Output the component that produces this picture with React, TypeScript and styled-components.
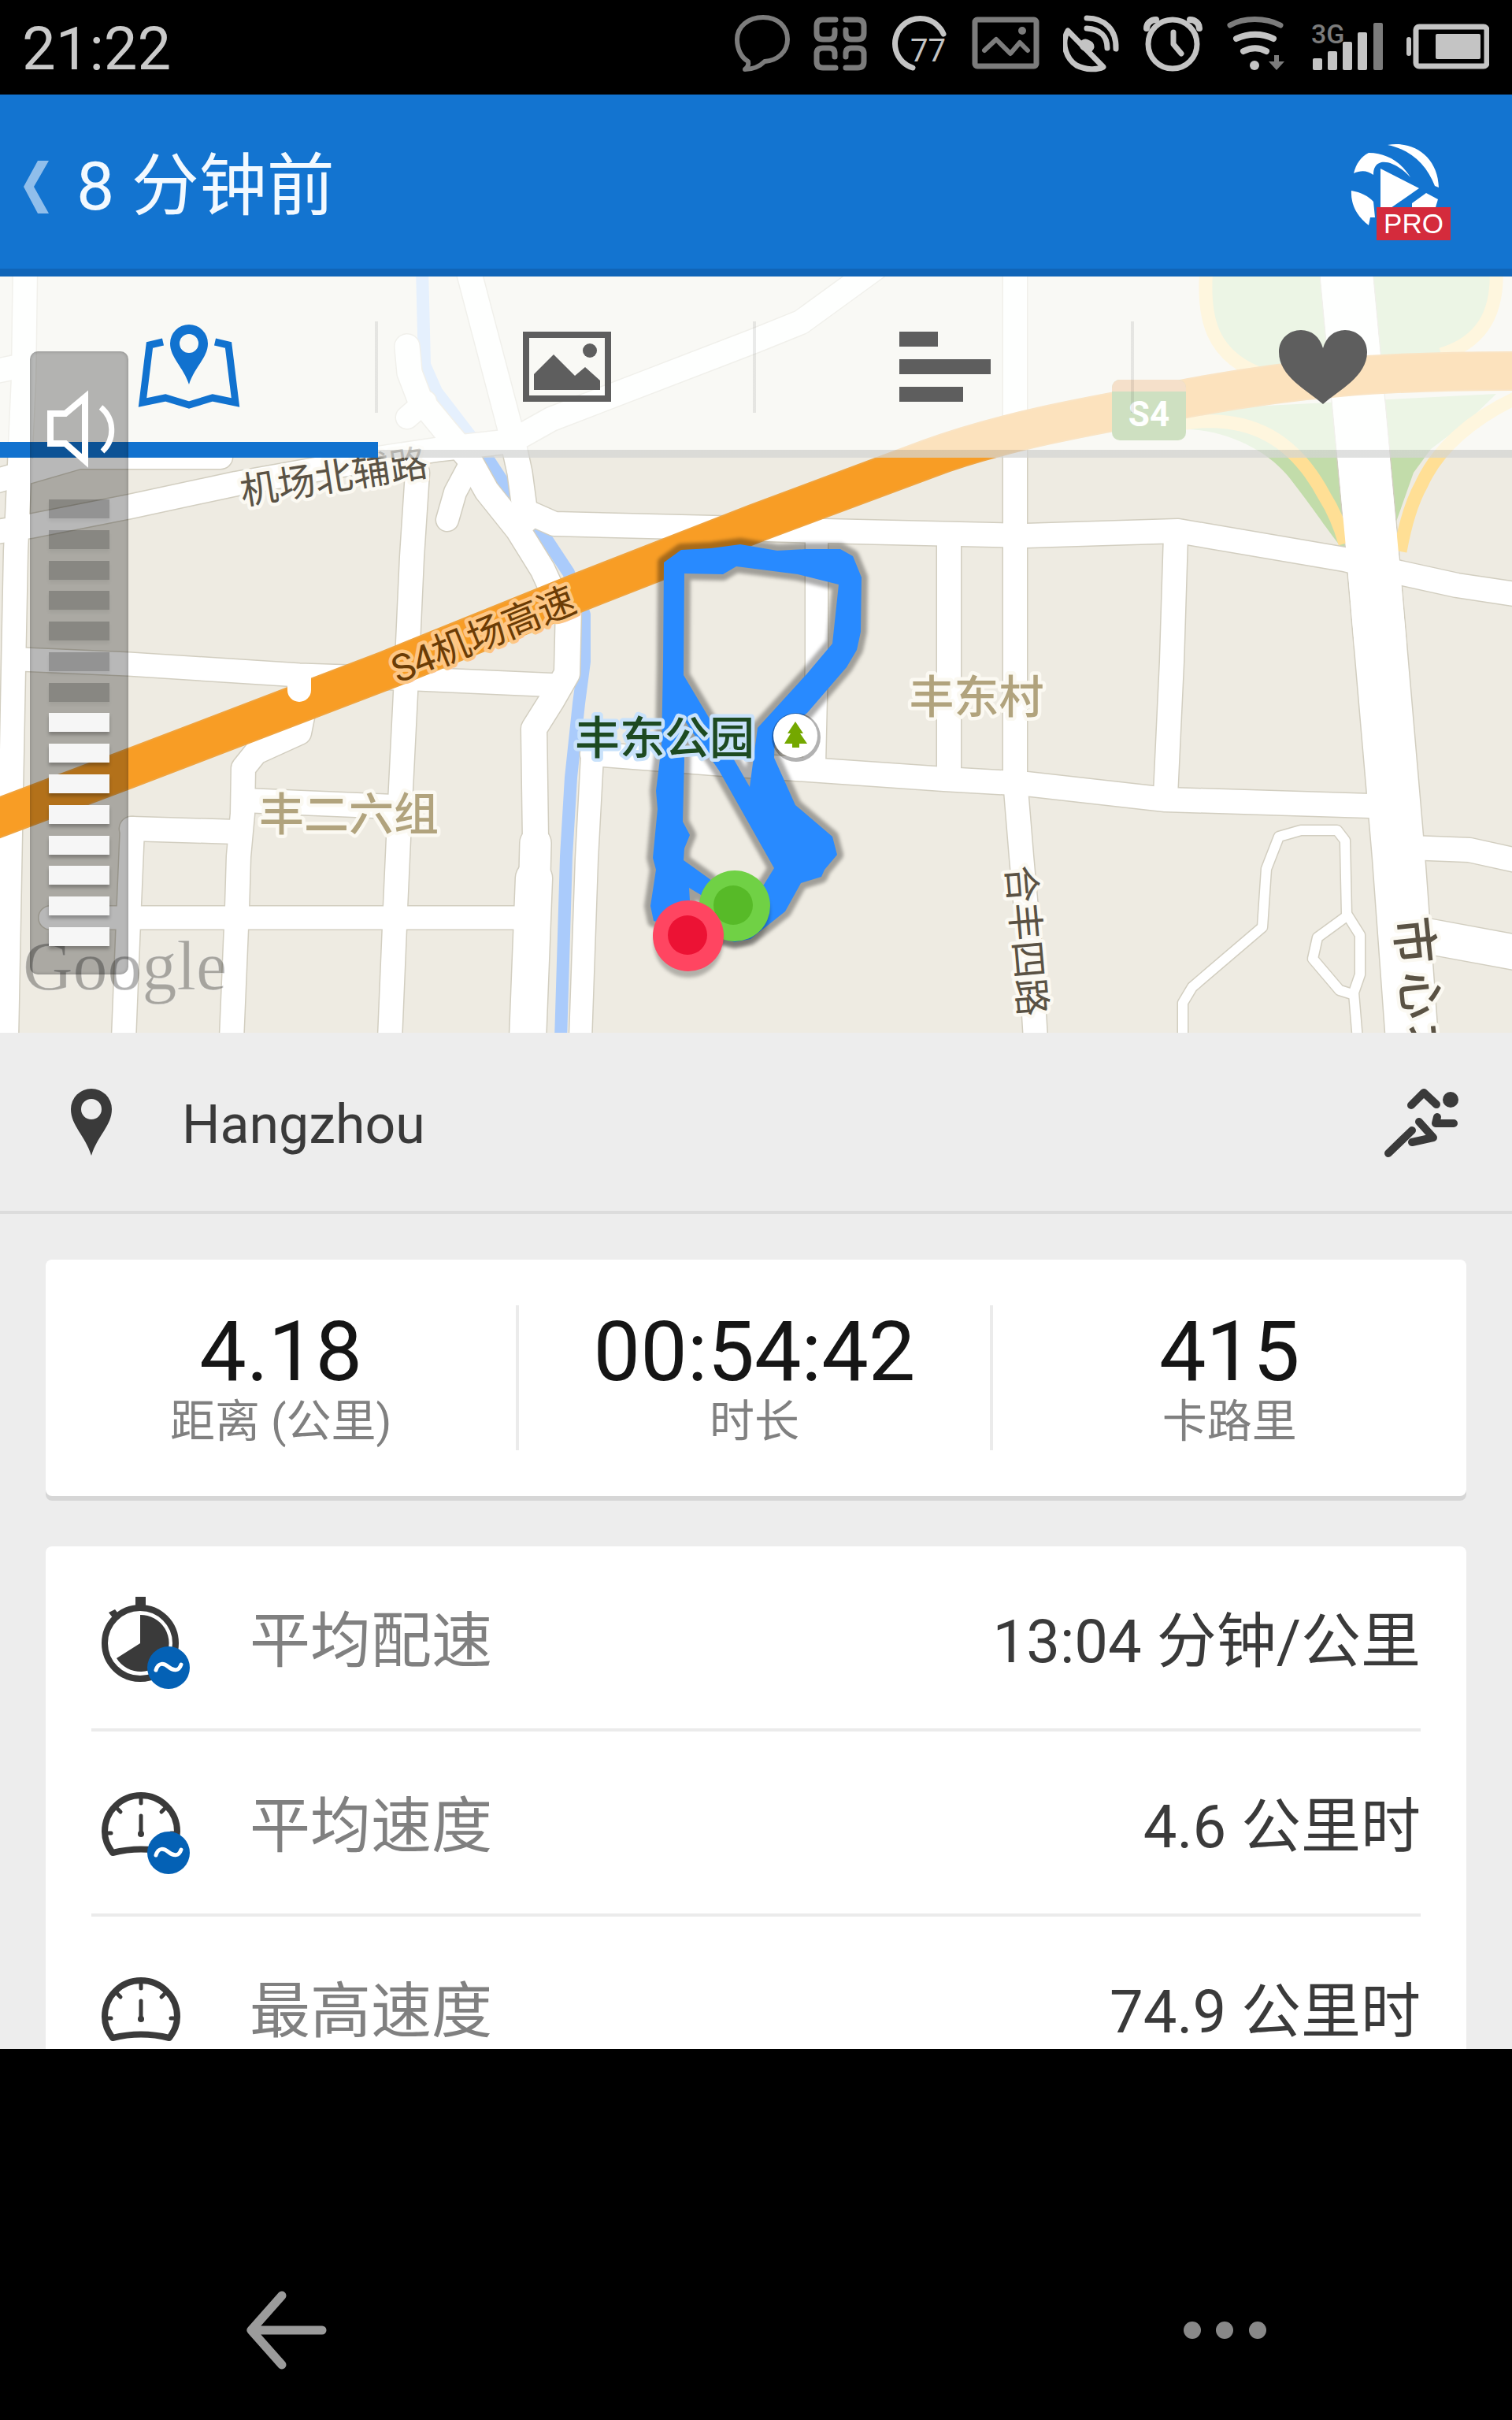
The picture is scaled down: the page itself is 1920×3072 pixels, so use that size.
import React, { useState } from 'react';
import styled, { createGlobalStyle } from 'styled-components';

const GlobalStyle = createGlobalStyle`
  * { box-sizing: border-box; }
  body { margin: 0; background: #000; }
  body, button { font-family: Roboto, "Noto Sans CJK SC", sans-serif; }
  button { border: 0; padding: 0; background: none; color: inherit; cursor: pointer; }
  svg { display: block; flex: none; }
  dl, dd, dt, h1, p { margin: 0; font-weight: 400; }
`;

const Screen = styled.div`
  display: flex;
  flex-direction: column;
  height: 100vh;
  background: #000;
`;

const StatusBar = styled.div`
  display: flex;
  align-items: center;
  justify-content: space-between;
  flex: none;
  height: 120px;
  padding: 0 29px 0 28px;
  color: #cacaca;
`;

const Clock = styled.time`
  font-size: 76px;
  line-height: 120px;
  padding-top: 4px;
`;

const StatusIcons = styled.div`
  display: flex;
  gap: 30px;
`;

const Header = styled.header`
  display: flex;
  align-items: center;
  justify-content: space-between;
  flex: none;
  height: 231px;
  padding: 12px 72px 0 25px;
  background: #1374d0;
  border-bottom: 10px solid #1065b8;
`;

const BackButton = styled.button`
  display: flex;
  align-items: center;
  gap: 32px;
  color: #f2f9ff;
`;

const Title = styled.h1`
  font-size: 86px;
  line-height: 120px;
`;

const LogoLink = styled.a`
  padding-top: 14px;
`;

const Content = styled.main`
  flex: 1 1 0;
  min-height: 0;
  overflow-y: auto;
  scrollbar-width: none;
  background: #ededed;
`;

const MapPanel = styled.section`
  position: relative;
  background: #efece4;
`;

const MapDrawing = styled.svg`
  width: 100%;
  height: auto;
`;

const Tabs = styled.nav`
  position: absolute;
  inset: 0 0 auto 0;
  display: grid;
  grid-template-columns: repeat(4, 1fr);
  height: 230px;
  background: rgba(254, 255, 253, 0.7);
`;

const Tab = styled.button<{ $active: boolean }>`
  display: flex;
  align-items: center;
  justify-content: center;
  color: ${p => (p.$active ? '#1172cf' : '#5e5e5e')};
  background-image:
    linear-gradient(${p => (p.$active ? '#1172cf, #1172cf' : 'rgba(0,0,0,.12), rgba(0,0,0,.12)')}),
    linear-gradient(rgba(0, 0, 0, 0.08), rgba(0, 0, 0, 0.08));
  background-repeat: no-repeat;
  background-size: 100% ${p => (p.$active ? 20 : 10)}px, 4px 116px;
  background-position: 0 100%, right 0 center;
  &:last-child {
    background-size: 100% ${p => (p.$active ? 20 : 10)}px, 0 0;
  }
`;

const VolumePanel = styled.div`
  position: absolute;
  top: 95px;
  left: 38px;
  display: flex;
  flex-direction: column;
  align-items: center;
  gap: 40px;
  width: 125px;
  height: 791px;
  padding: 48px 0 36px;
  border-radius: 10px;
  background: rgba(0, 0, 0, 0.28);
  box-shadow: inset 0 0 4px rgba(0, 0, 0, 0.25);
`;

const VolumeLevels = styled.div`
  display: flex;
  flex: 1;
  flex-direction: column;
  justify-content: space-between;
`;

const VolumeStep = styled.span<{ $on: boolean }>`
  width: 77px;
  height: 24px;
  background: ${p => (p.$on ? '#f6f6f6' : 'rgba(0,0,0,.2)')};
  box-shadow: 0 4px 4px rgba(0, 0, 0, ${p => (p.$on ? 0.25 : 0.05)});
`;

const LocationRow = styled.section`
  display: flex;
  align-items: center;
  height: 230px;
  padding: 0 66px 0 89px;
  border-bottom: 4px solid #dcdcdc;
  color: #3a3a3a;
`;

const Place = styled.p`
  flex: 1;
  padding: 8px 0 0 88px;
  font-size: 68px;
  line-height: 80px;
`;

const Cards = styled.div`
  display: flex;
  flex-direction: column;
  gap: 64px;
  padding: 58px;
`;

const Card = styled.section`
  border-radius: 8px;
  background: #fff;
  box-shadow: 0 6px 0 #d6d6d6;
`;

const Summary = styled.dl`
  display: grid;
  grid-template-columns: repeat(3, 1fr);
  padding: 58px 0;
`;

const Stat = styled.div`
  display: flex;
  flex-direction: column-reverse;
  align-items: center;
  justify-content: flex-end;
  height: 184px;
  border-right: 4px solid #ebebeb;
  &:last-child { border-right: 0; }
`;

const StatValue = styled.dd`
  color: #151515;
  font-size: 106px;
  line-height: 118px;
`;

const StatLabel = styled.dt`
  color: #808080;
  font-size: 57px;
  line-height: 60px;
`;

const Metrics = styled.dl`
  padding: 0 58px;
`;

const Metric = styled.div`
  display: flex;
  align-items: center;
  height: 235px;
  padding: 6px 0 0 5px;
  background: linear-gradient(#ebebeb, #ebebeb) 0 100% / 100% 4px no-repeat;
`;

const MetricName = styled.dt`
  flex: 1;
  padding-left: 66px;
  color: #808080;
  font-size: 77px;
  line-height: 100px;
`;

const MetricValue = styled.dd`
  color: #3a3a3a;
  font-size: 76px;
  line-height: 100px;
`;

const NavBar = styled.nav`
  display: flex;
  align-items: flex-end;
  justify-content: space-between;
  flex: none;
  height: 471px;
  padding: 0 300px 54px;
  color: #9b9b9b;
`;

const NavButton = styled.button`
  display: flex;
  align-items: center;
  justify-content: center;
  width: 128px;
  height: 120px;
`;

/* Status icons share one horizontal ruler, so each starts at its own x. */
function StatusGlyph({ x, w, label, children }: { x: number; w: number; label: string; children: React.ReactNode }) {
  return (
    <svg width={w} height={120} viewBox={`${x} 0 ${w} 120`} role="img" aria-label={label} fill="none" stroke="#c4c4c4" strokeWidth={6} strokeLinecap="round" strokeLinejoin="round">
      {children}
    </svg>
  );
}

const DIM = '#7c7c7c';

function StatusGlyphs() {
  return (
    <StatusIcons>
      <StatusGlyph x={934} w={70} label="message">
        <path stroke={DIM} d="M951 78C942 73 937 62 937 50C937 34 951 22 970 22S1001 34 1001 50S988 77 972 78C966 84 957 88 947 88C951 85 952 82 951 78Z" />
      </StatusGlyph>
      <StatusGlyph x={1034} w={70} label="apps">
        <g stroke={DIM} strokeWidth={7}>
          <path d="M1062 25H1046Q1038 25 1038 33V42Q1038 50 1046 50H1054Q1061 50 1061 42V38" />
          <path d="M1075 25H1090Q1098 25 1098 33V42Q1098 50 1090 50H1082Q1075 50 1075 42V38" />
          <path d="M1061 72V68Q1061 61 1054 61H1046Q1038 61 1038 68V78Q1038 86 1046 86H1062" />
          <path d="M1075 72V68Q1075 61 1082 61H1090Q1098 61 1098 68V78Q1098 86 1090 86H1075" />
        </g>
      </StatusGlyph>
      <StatusGlyph x={1134} w={70} label="77">
        <path strokeWidth={7} d="M1160 86A32 32 0 1 1 1199 43" />
        <text x={1157} y={78} fontSize={40} fontFamily="Roboto" fill="#c4c4c4" stroke="none">77</text>
      </StatusGlyph>
      <StatusGlyph x={1234} w={87} label="picture">
        <g stroke={DIM}>
          <rect x={1239} y={25} width={78} height={59} rx={3} strokeWidth={7} />
          <path d="M1251 64L1266 50L1284 68L1296 54L1306 64" />
          <circle cx={1299} cy={39} r={5} fill={DIM} stroke="none" />
        </g>
      </StatusGlyph>
      <StatusGlyph x={1351} w={72} label="location">
        <path strokeWidth={7} d="M1357 39C1348 55 1355 75 1368 83C1380 89 1394 89 1402 85Z" />
        <path d="M1379 57L1383 59" strokeWidth={15} />
        <path strokeWidth={7} d="M1381 36C1398 37 1407 46 1407 61M1381 23C1404 23 1419 38 1418 62" />
      </StatusGlyph>
      <StatusGlyph x={1453} w={75} label="alarm">
        <circle cx={1490} cy={56} r={31} strokeWidth={7} />
        <path strokeWidth={7} d="M1491 41V56L1501 68" />
        <path d="M1457 36C1457 30 1462 25 1469 25M1524 36C1524 30 1519 25 1512 25" strokeWidth={8} />
      </StatusGlyph>
      <StatusGlyph x={1558} w={78} label="wifi">
        <path stroke={DIM} strokeWidth={7} d="M1563 32C1580 22 1608 22 1627 32" />
        <path strokeWidth={8} d="M1571 49C1586 42 1604 42 1618 49M1580 65C1590 60 1600 60 1609 65" />
        <circle cx={1594} cy={83} r={6} fill="#c4c4c4" stroke="none" />
        <path stroke="none" fill={DIM} d="M1619 70H1625V78H1632L1622 89L1612 78H1619Z" />
      </StatusGlyph>
      <StatusGlyph x={1666} w={91} label="3G signal">
        <text x={1666} y={55} fontSize={34} fontFamily="Roboto" fontWeight={500} fill={DIM} stroke="none">3G</text>
        <g stroke="none" fill="#c4c4c4">
          <rect x={1668} y={74} width={12} height={15} rx={2} />
          <rect x={1687} y={65} width={12} height={24} rx={2} />
          <rect x={1706} y={53} width={12} height={36} rx={2} />
          <rect x={1725} y={41} width={12} height={48} rx={2} />
          <rect x={1745} y={29} width={12} height={60} rx={2} fill={DIM} />
        </g>
      </StatusGlyph>
      <StatusGlyph x={1786} w={105} label="battery">
        <rect x={1798} y={34} width={90} height={50} rx={4} strokeWidth={7} />
        <rect x={1823} y={43} width={57} height={32} rx={2} fill="#c4c4c4" stroke="none" />
        <path d="M1789 50V68" />
      </StatusGlyph>
    </StatusIcons>
  );
}

function Logo() {
  return (
    <svg width={134} height={126} viewBox="1714 181 134 126" role="img" aria-label="PRO">
      <g fill="#fff">
        <path d="M1762 184C1796 178 1826 200 1827 238L1822 236C1812 210 1792 190 1762 184Z" />
        <path d="M1719 220C1722 208 1728 199 1738 194C1762 194 1780 207 1791 225C1778 211 1764 204 1754 206C1747 208 1744 213 1744 222C1736 216 1728 216 1719 220Z" />
        <path d="M1716 242C1728 244 1738 249 1744 256L1746 276H1740L1738 286C1722 274 1715 258 1716 242Z" />
        <path d="M1753 214L1802 239L1766 264H1753Z" />
        <path d="M1811 245L1826 253L1823 263H1793V258Z" />
      </g>
      <rect x={1748} y={263} width={94} height={42} fill="#d42b3c" />
      <text x={1795} y={296} textAnchor="middle" fontSize={35} fontFamily='"Liberation Sans", sans-serif' fill="#fff">PRO</text>
    </svg>
  );
}

type Road = { w: number; d: string };

const roads: Road[] = [
  { w: 30, d: 'M32 340L30 480L20 700L16 900L8 1320' },
  { w: 30, d: 'M-10 472L30 464' },
  { w: 30, d: 'M-10 612L100 580H280' },
  { w: 30, d: 'M-10 676L38 668L165 643L300 614L480 582L560 570L650 560L700 532L960 432L1017 409L1112 340' },
  { w: 31, d: 'M594 340L648 545L660 600L668 660' },
  { w: 31, d: 'M517 440L520 473L533 507L566 547L594 580L618 623L658 673L689 723L706 760' },
  { w: 28, d: 'M517 530L540 510' },
  { w: 28, d: 'M594 595L578 625L568 660' },
  { w: 30, d: 'M530 600L523 707L518 817L515 880L508 1020L502 1153L495 1320' },
  { w: 30, d: 'M670 650L704 665L906 670L1046 674L1303 680L1496 674L1707 710L1777 727L1850 743L1930 755' },
  { w: 29, d: 'M26 837L163 843L380 857L530 862L710 870' },
  { w: 32, d: 'M722 770L720 855L700 890L678 925L680 1065' },
  { w: 39, d: 'M680 1070L679 1110' },
  { w: 46, d: 'M678 1115L670 1320' },
  { w: 30, d: 'M386 900L380 930L325 955L309 975L308 1033L303 1087L301 1153L294 1320' },
  { w: 30, d: 'M167 1052L300 1056' },
  { w: 30, d: 'M310 1016L500 1024' },
  { w: 30, d: 'M168 1052L163 1170L157 1320' },
  { w: 29, d: 'M64 1165H670' },
  { w: 28, d: 'M752 960L745 1090L737 1320' },
  { w: 30, d: 'M752 957L920 970L997 975L1199 989L1303 995L1480 1015L1740 1023' },
  { w: 30, d: 'M1205 680V985' },
  { w: 30, d: 'M1289 340V990L1297 1087L1309 1220L1315 1320' },
  { w: 30, d: 'M1493 680L1488 840L1480 1010' },
  { w: 28, d: 'M1037 685V840L1034 970' },
  { w: 66, d: 'M1709 340L1726 520L1742 693L1753 820L1776 1087L1793 1320' },
  { w: 30, d: 'M1790 1076L1866 1079L1930 1093' },
  { w: 44, d: 'M1800 1186L1930 1210' },
  { w: 12, d: 'M1502 1320V1273L1514 1253L1603 1177L1608 1103L1624 1062L1652 1054H1698L1708 1067L1710 1160L1727 1187V1237L1719 1260L1724 1320' },
  { w: 12, d: 'M1710 1163L1673 1190L1667 1217L1701 1257L1717 1262' },
];

const highway = 'M-20 1045L163 976L490 851L735 752L960 664L1180 582C1280 545 1400 525 1500 507C1640 480 1760 470 1940 471';

/* Outer edge of the run, then the three pieces of ground that it encloses. */
const track = [
  'M843 714L865 698L903 696L940 691L987 699L1023 697L1067 697L1083 706L1094 733L1093 802L1088 825L1075 847L1025 905L984 936L983 962L1010 1022L1057 1062L1063 1085L1047 1104L1043 1113L1017 1121L997 1157L953 1192L933 1196L830 1169L826 1150L833 1104L829 1089L835 1027L833 1004L840 947L842 844Z',
  'M869 728L918 729L935 719L1013 729L1065 742L1057 817L1025 855L962 924L952 999L933 966L868 857Z',
  'M868 913L913 978L983 1102L970 1123L931 1140L900 1115L868 1092L869 1077L876 1060L867 1043L869 966Z',
  'M875 1127L890 1136L910 1160H877Z',
].join('');

function MapLabel({ x, y, size = 48, turn = 0, color = '#5a5244', halo = '#fbf9f2', weight = 400, children }: {
  x: number; y: number; size?: number; turn?: number; color?: string; halo?: string; weight?: number; children: string;
}) {
  return (
    <text x={x} y={y} transform={`rotate(${turn} ${x} ${y})`} dominantBaseline="central" textAnchor="middle" fontSize={size} fontWeight={weight} fill={color} stroke={halo} strokeWidth={9} strokeLinejoin="round" paintOrder="stroke" fontFamily='Roboto, "Noto Sans CJK SC", sans-serif'>
      {children}
    </text>
  );
}

function RouteMap() {
  return (
    <MapDrawing viewBox="0 351 1920 960" role="img" aria-label="route map">
      <defs>
        <filter id="soft" x="-10%" y="-10%" width="120%" height="120%">
          <feGaussianBlur stdDeviation={2} />
        </filter>
      </defs>
      <rect y={340} width={1920} height={980} fill="#eeebe2" />
      <path fill="#c2dcaa" d="M1529 340V407C1535 440 1570 465 1603 475L1740 470L1835 447C1880 430 1900 400 1903 340Z" />
      <path fill="#c2dcaa" d="M1505 545C1560 545 1615 575 1640 610C1675 655 1690 680 1708 700L1772 665L1795 600L1817 570L1866 533L1900 500L1511 520Z" />
      <path fill="#eeebe2" d="M1800 640L1822 575L1870 540L1920 515V640Z" />
      <g fill="none" stroke="#aacbfb" strokeWidth={16} strokeLinejoin="round">
        <path d="M536 340L539 463L554 497L597 553L618 580L646 623L689 677L722 727L742 780V840L735 893L725 987L719 1087L712 1320" />
      </g>
      <g fill="none" strokeLinejoin="round" strokeLinecap="round">
        {roads.map(r => <path key={r.d} d={r.d} stroke="#d2cec0" strokeWidth={r.w + 3} />)}
        {roads.map(r => <path key={r.d} d={r.d} stroke="#fff" strokeWidth={r.w} />)}
      </g>
      <g fill="none" stroke="#ffdf95" strokeWidth={17}>
        <path d="M1532 340C1527 400 1535 455 1610 478" />
        <path d="M1900 340C1903 400 1880 435 1830 450" />
        <path d="M1505 537C1590 525 1645 560 1682 630Q1698 655 1708 690" />
        <path d="M1930 503C1870 530 1825 570 1805 615Q1788 645 1778 700" />
      </g>
      <path d="M1709 340L1726 520L1742 693L1753 820" stroke="#fff" strokeWidth={66} fill="none" />
      <path d={highway} stroke="#f0a33d" strokeWidth={50} fill="none" />
      <path d={highway} stroke="#f89d25" strokeWidth={46} fill="none" />
      <path d="M380 860V876" stroke="#fff" strokeWidth={30} strokeLinecap="round" />

      <rect x={1412} y={482} width={94} height={77} rx={10} fill="#5f9834" />
      <path d="M1412 497V492A10 10 0 0 1 1422 482H1496A10 10 0 0 1 1506 492V497Z" fill="#e29650" />
      <text x={1459} y={541} textAnchor="middle" fontSize={44} fontWeight={700} fontFamily="Roboto" fill="#fff">S4</text>

      <MapLabel x={424} y={606} turn={-9}>机场北辅路</MapLabel>
      <MapLabel x={614} y={806} turn={-22} color="#6b3c05" halo="#fdc785">S4机场高速</MapLabel>

      <g fillRule="evenodd" strokeLinejoin="round">
        <path d={track} fill="none" stroke="#000" strokeOpacity={0.32} strokeWidth={16} filter="url(#soft)" />
        <path d={track} fill="#288aff" />
      </g>

      <MapLabel x={844} y={937} size={57} weight={500} color="#1d4a22" halo="#c9e2fb">丰东公园</MapLabel>
      <MapLabel x={443} y={1034} size={57} weight={500} color="#b1a37d">丰二六组</MapLabel>
      <MapLabel x={1240} y={885} size={57} weight={500} color="#b1a37d">丰东村</MapLabel>
      <MapLabel x={1303} y={1194} turn={85}>合丰四路</MapLabel>
      <MapLabel x={1795} y={1194} size={60} weight={500} turn={84}>市</MapLabel>
      <MapLabel x={1802} y={1263} size={60} weight={500} turn={84}>心</MapLabel>
      <MapLabel x={1810} y={1330} size={60} weight={500} turn={84}>北</MapLabel>

      <circle cx={1011} cy={936} r={31} fill="#000" fillOpacity={0.3} />
      <circle cx={1010} cy={934} r={28} fill="#fff" />
      <path d="M1010 916L1020 931H1016L1025 944H1015V949H1006V944H996L1004 931H1000Z" fill="#74a800" />

      <text x={29} y={1256} fontSize={88} fontFamily='"Liberation Serif", serif' fill="#000" fillOpacity={0.3} stroke="#fff" strokeOpacity={0.4} strokeWidth={1}>Google</text>

      <ellipse cx={933} cy={1158} rx={45} ry={44} fill="#000" fillOpacity={0.25} filter="url(#soft)" />
      <circle cx={933} cy={1150} r={45} fill="#70d145" />
      <circle cx={931} cy={1149} r={25} fill="#57ba28" />
      <ellipse cx={874} cy={1197} rx={44} ry={44} fill="#000" fillOpacity={0.25} filter="url(#soft)" />
      <circle cx={874} cy={1188} r={45} fill="#ff4561" />
      <circle cx={873} cy={1187} r={25} fill="#ec1234" />
    </MapDrawing>
  );
}

const tabIcons: { name: string; art: React.ReactNode }[] = [
  {
    name: '地图',
    art: (
      <svg width={140} height={120} viewBox="170 406 140 120">
        <path d="M207 434L190 438L181 511L210 505L240 514L270 505L299 511L290 438L273 434" fill="none" stroke="currentColor" strokeWidth={9} />
        <path fillRule="evenodd" fill="currentColor" d="M240 488C233 466 216 454 216 436A24 24 0 1 1 264 436C264 454 247 466 240 488ZM240 448A12 12 0 1 0 240 424A12 12 0 1 0 240 448Z" />
      </svg>
    ),
  },
  {
    name: '照片',
    art: (
      <svg width={140} height={120} viewBox="650 406 140 120" fill="currentColor">
        <rect x={668} y={425} width={104} height={81} fill="none" stroke="currentColor" strokeWidth={8} />
        <path d="M678 495V475L703 450L730 477L743 466L762 483V495Z" />
        <circle cx={749} cy={445} r={9} />
      </svg>
    ),
  },
  {
    name: '图表',
    art: (
      <svg width={140} height={120} viewBox="1130 406 140 120" fill="currentColor">
        <path d="M1142 421H1191V440H1142ZM1142 456H1258V475H1142ZM1142 491H1223V510H1142Z" />
      </svg>
    ),
  },
  {
    name: '心率',
    art: (
      <svg width={140} height={120} viewBox="1610 406 140 120" fill="currentColor">
        <path d="M1680 513C1660 495 1624 478 1624 447C1624 430 1637 419 1652 419C1666 419 1676 428 1680 442C1684 428 1694 419 1708 419C1723 419 1736 430 1736 447C1736 478 1700 495 1680 513Z" />
      </svg>
    ),
  },
];

function Average() {
  return (
    <>
      <circle cx={93} cy={95} r={27} fill="#0461b5" />
      <path d="M77 98C80 88 87 89 93 94S106 100 109 91" fill="none" stroke="#fff" strokeWidth={5} strokeLinecap="round" />
    </>
  );
}

function PaceIcon() {
  return (
    <svg width={130} height={124} viewBox="0 0 130 124" aria-hidden>
      <circle cx={57} cy={64} r={45} fill="none" stroke="#3a3a3a" strokeWidth={8} />
      <path d="M51 5H64V18H51ZM17 25L25 21L32 30L24 34Z" fill="#3a3a3a" />
      <path d="M57 64V28A36 36 0 1 1 27 83Z" fill="#3a3a3a" />
      <Average />
    </svg>
  );
}

function SpeedIcon({ average }: { average: boolean }) {
  return (
    <svg width={130} height={124} viewBox="0 0 130 124" aria-hidden>
      <g fill="none" stroke="#3a3a3a" strokeLinecap="round">
        <path strokeWidth={8} strokeLinejoin="round" d="M22 95C15 85 12 78 12 68A46 46 0 0 1 104 68C104 78 101 85 94 95Q58 86 22 95Z" />
        <path strokeWidth={5} d="M58 26V32M28 39L32 43M88 39L84 43M15 70H20M101 70H96M58 48V70" />
      </g>
      <circle cx={58} cy={71} r={4} fill="#3a3a3a" />
      {average && <Average />}
    </svg>
  );
}

const stats = [
  { label: '距离 (公里)', value: '4.18' },
  { label: '时长', value: '00:54:42' },
  { label: '卡路里', value: '415' },
];

const metrics = [
  { label: '平均配速', value: '13:04 分钟/公里', icon: <PaceIcon /> },
  { label: '平均速度', value: '4.6 公里时', icon: <SpeedIcon average /> },
  { label: '最高速度', value: '74.9 公里时', icon: <SpeedIcon average={false} /> },
];

export default function App() {
  const [tab, setTab] = useState(0);
  const volume = 8;
  const steps = 15;

  return (
    <Screen>
      <GlobalStyle />
      <StatusBar>
        <Clock>21:22</Clock>
        <StatusGlyphs />
      </StatusBar>
      <Header>
        <BackButton type="button">
          <svg width={40} height={70} viewBox="26 200 40 70" aria-hidden>
            <path d="M49 202H63L44 235L63 269H49L31 235Z" fill="#90beeb" />
          </svg>
          <Title>8 分钟前</Title>
        </BackButton>
        <LogoLink href="#pro">
          <Logo />
        </LogoLink>
      </Header>
      <Content>
        <MapPanel>
          <RouteMap />
          <Tabs>
            {tabIcons.map((t, i) => (
              <Tab key={t.name} type="button" aria-label={t.name} $active={i === tab} onClick={() => setTab(i)}>
                {t.art}
              </Tab>
            ))}
          </Tabs>
          <VolumePanel role="meter" aria-label="音量" aria-valuemin={0} aria-valuemax={steps} aria-valuenow={volume}>
            <svg width={100} height={100} viewBox="50 492 100 100" fill="none" stroke="#fff">
              <path strokeWidth={8} d="M63 523H82L107 502V583L82 561H63Z" />
              <path strokeWidth={7} d="M127 515C145 530 145 556 129 571" />
            </svg>
            <VolumeLevels>
              {Array.from({ length: steps }, (_, i) => (
                <VolumeStep key={i} $on={i >= steps - volume} />
              ))}
            </VolumeLevels>
          </VolumePanel>
        </MapPanel>
        <LocationRow>
          <svg width={54} height={88} viewBox="88 1381 54 88" aria-hidden>
            <path fill="#3a3a3a" fillRule="evenodd" d="M115 1468C107 1442 89 1430 89 1409A26 26 0 1 1 141 1409C141 1430 123 1442 115 1468ZM115 1422A13 13 0 1 0 115 1396A13 13 0 1 0 115 1422Z" />
          </svg>
          <Place>Hangzhou</Place>
          <svg width={98} height={90} viewBox="1756 1380 98 90" fill="none" stroke="#3a3a3a" strokeWidth={10} strokeLinecap="round" strokeLinejoin="round" aria-hidden>
            <circle cx={1842} cy={1397} r={10} fill="#3a3a3a" stroke="none" />
            <path d="M1792 1404L1808 1388L1824 1403" />
            <path d="M1825 1419L1823 1427H1846" />
            <path d="M1802 1425L1820 1445L1793 1451" />
            <path d="M1793 1436L1763 1465" />
          </svg>
        </LocationRow>
        <Cards>
          <Card>
            <Summary>
              {stats.map(s => (
                <Stat key={s.label}>
                  <StatLabel>{s.label}</StatLabel>
                  <StatValue>{s.value}</StatValue>
                </Stat>
              ))}
            </Summary>
          </Card>
          <Card>
            <Metrics>
              {metrics.map(m => (
                <Metric key={m.label}>
                  {m.icon}
                  <MetricName>{m.label}</MetricName>
                  <MetricValue>{m.value}</MetricValue>
                </Metric>
              ))}
            </Metrics>
          </Card>
        </Cards>
      </Content>
      <NavBar>
        <NavButton type="button" aria-label="返回">
          <svg width={104} height={104} viewBox="313 2906 104 104" fill="none" stroke="#9b9b9b" strokeWidth={11} strokeLinecap="round" strokeLinejoin="round">
            <path d="M359 2914L320 2958L359 3002M322 2958H410" />
          </svg>
        </NavButton>
        <NavButton type="button" aria-label="更多">
          <svg width={106} height={24} viewBox="1504 2944 106 24" fill="#888">
            <circle cx={1515} cy={2956} r={11} />
            <circle cx={1556} cy={2956} r={11} />
            <circle cx={1598} cy={2956} r={11} />
          </svg>
        </NavButton>
      </NavBar>
    </Screen>
  );
}
